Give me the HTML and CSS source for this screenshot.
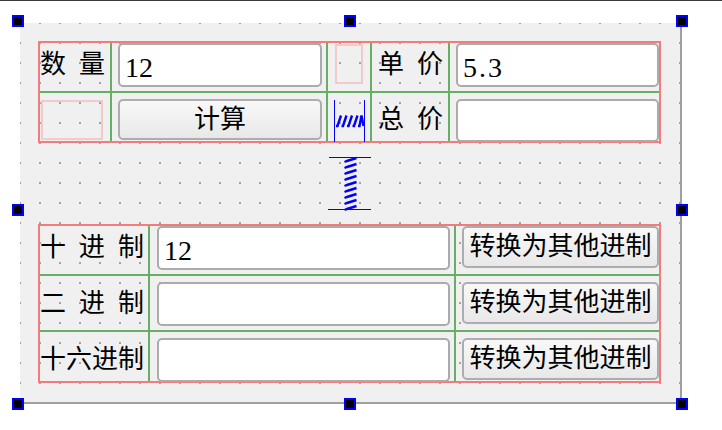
FILE: index.html
```html
<!DOCTYPE html>
<html lang="zh">
<head>
<meta charset="utf-8">
<title>Form</title>
<link rel="stylesheet" href="styles.css">
</head>
<body>
<div class="topline"></div>
<div class="stage">
  <div class="form">
    <span class="handle h-tl"></span>
    <span class="handle h-tm"></span>
    <span class="handle h-tr"></span>
    <span class="handle h-ml"></span>
    <span class="handle h-mr"></span>
    <span class="handle h-bl"></span>
    <span class="handle h-bm"></span>
    <span class="handle h-br"></span>

    <div class="grid-top">
      <div class="cell sep-r sep-b"><div class="label lbl-r1">数 量</div></div>
      <div class="cell sep-r sep-b"><div class="edit edit-t1">12</div></div>
      <div class="cell sep-r sep-b"><div class="ghost ghost-sm"></div></div>
      <div class="cell sep-r sep-b pad-l6"><div class="label lbl-r1">单 价</div></div>
      <div class="cell sep-b"><div class="edit edit-t2 edit-spaced">5.3</div></div>

      <div class="cell sep-r"><div class="ghost ghost-wide"></div></div>
      <div class="cell sep-r"><div class="btn btn-calc">计算</div></div>
      <div class="cell sep-r">
        <svg class="hspring" width="42" height="50" viewBox="0 0 42 50">
          <line x1="6.5" y1="7" x2="6.5" y2="49" stroke="#0000ff" stroke-width="1"/>
          <line x1="36.5" y1="7" x2="36.5" y2="49" stroke="#0000ff" stroke-width="1"/>
          <g stroke="#0000ff" stroke-width="2.4" fill="none">
            <polyline points="8,33 9.5,33 13,22.5"/>
            <polyline points="13.5,33 15,33 18.5,22.5"/>
            <polyline points="19,33 20.5,33 24,22.5"/>
            <polyline points="24.5,33 26,33 29.5,22.5"/>
            <polyline points="30,33 31.5,33 33.5,22.5 35.5,33"/>
          </g>
        </svg>
      </div>
      <div class="cell sep-r pad-l6"><div class="label lbl-r2">总 价</div></div>
      <div class="cell"><div class="edit edit-t3"></div></div>
    </div>

    <div class="vspacer">
      <svg width="44" height="56" viewBox="0 0 44 56">
        <line x1="1" y1="1.5" x2="43" y2="1.5" stroke="#0000ff" stroke-width="1"/>
        <line x1="0" y1="53.5" x2="43" y2="53.5" stroke="#0000ff" stroke-width="1"/>
        <g stroke="#0000ff" stroke-width="2.4" fill="none">
          <polyline points="16.5,6 19,5 28.5,2"/>
          <polyline points="16.5,12 19,11 28.5,8"/>
          <polyline points="16.5,18 19,17 28.5,14"/>
          <polyline points="16.5,24 19,23 28.5,20"/>
          <polyline points="16.5,30 19,29 28.5,26"/>
          <polyline points="16.5,36 19,35 28.5,32"/>
          <polyline points="16.5,42 19,41 28.5,38"/>
          <polyline points="16.5,48 19,47 28.5,44"/>
          <polyline points="16.5,54 19,53 28.5,50"/>
        </g>
      </svg>
    </div>

    <div class="grid-bot">
      <div class="cell sep-r sep-b"><div class="label lbl-b1">十 进 制</div></div>
      <div class="cell sep-r sep-b"><div class="edit edit-b edit-b1">12</div></div>
      <div class="cell sep-b"><div class="btn btn-conv btn-b1">转换为其他进制</div></div>

      <div class="cell sep-r sep-b"><div class="label lbl-b2">二 进 制</div></div>
      <div class="cell sep-r sep-b"><div class="edit edit-b edit-b2"></div></div>
      <div class="cell sep-b"><div class="btn btn-conv btn-b2">转换为其他进制</div></div>

      <div class="cell sep-r"><div class="label lbl-b2">十六进制</div></div>
      <div class="cell sep-r"><div class="edit edit-b edit-b2"></div></div>
      <div class="cell"><div class="btn btn-conv btn-b2">转换为其他进制</div></div>
    </div>
  </div>
</div>
</body>
</html>
```

FILE: styles.css
```css
* {
  box-sizing: border-box;
}

html,
body {
  margin: 0;
  padding: 0;
  background: #ffffff;
}

body {
  width: 722px;
  height: 430px;
  overflow: hidden;
  font-family: "Liberation Serif", "Noto Sans CJK SC", serif;
  font-size: 26px;
  color: #000000;
}

.topline {
  height: 1px;
  background: #3a3a3a;
}

.stage {
  padding: 22px 0 0 20px;
}

.form {
  position: relative;
  width: 662px;
  height: 381px;
  padding: 18px 0 0 18px;
  display: flex;
  flex-direction: column;
  align-items: flex-start;
  background-color: #f0f0f0;
  background-image: conic-gradient(from 270deg at 2px 2px, #a3a3a3 25%, transparent 0);
  background-size: 20px 20px;
  background-position: -1px -1px;
  border-right: 2px solid #a0a0a0;
  border-bottom: 2px solid #a0a0a0;
}

/* selection handles */
.handle {
  position: absolute;
  width: 12px;
  height: 12px;
  background: #000000;
  border: 2px solid #0000ff;
  z-index: 5;
}
.h-tl { left: -8px; top: -8px; }
.h-tm { left: 324px; top: -8px; }
.h-tr { left: 656px; top: -8px; }
.h-ml { left: -8px; top: 181px; }
.h-mr { left: 656px; top: 181px; }
.h-bl { left: -8px; top: 375px; }
.h-bm { left: 324px; top: 375px; }
.h-br { left: 656px; top: 375px; }

/* layouts */
.grid-top {
  width: 623px;
  height: 102px;
  border: 2px solid #f27b7b;
  display: grid;
  grid-template-columns: 72px 216px 44px 78px 209px;
  grid-template-rows: 50px 48px;
}

.grid-bot {
  margin-top: 12px;
  width: 623px;
  height: 159px;
  border: 2px solid #f27b7b;
  display: grid;
  grid-template-columns: 110px 306px 203px;
  grid-template-rows: 50px 56px 49px;
}

.cell {
  display: flex;
  align-items: flex-start;
  min-width: 0;
}

.sep-r {
  border-right: 2px solid #66b066;
}

.sep-b {
  border-bottom: 2px solid #66b066;
}

.pad-l6 {
  padding-left: 6px;
}

/* labels */
.label {
  display: flex;
  align-items: center;
  height: 44px;
  line-height: 1;
  white-space: pre;
  word-spacing: 6.5px;
}
.lbl-r1 { margin-top: 0; height: 44px; }
.lbl-r2 { margin-top: 6px; height: 42px; }
.lbl-b1 { margin-top: 0; }
.lbl-b2 { margin-top: 6px; }

/* line edits */
.edit {
  display: flex;
  align-items: center;
  height: 44px;
  padding: 5px 0 0 5px;
  font-size: 28px;
  line-height: 1;
  background: #ffffff;
  border: 2px solid #ababab;
  border-radius: 5px;
}
.edit-t1 { margin-left: 6px; width: 204px; }
.edit-t2 { margin-left: 6px; width: 203px; flex: none; }
.edit-t3 { margin-left: 6px; margin-top: 6px; width: 203px; height: 43px; flex: none; }
.edit-spaced { letter-spacing: 2px; }
.edit-b { margin-left: 7px; width: 293px; }
.edit-b1 { margin-top: 0; }
.edit-b2 { margin-top: 6px; }

/* push buttons */
.btn {
  display: flex;
  align-items: center;
  justify-content: center;
  line-height: 1;
  border: 2px solid #adadad;
  border-radius: 5px;
  background: linear-gradient(#f8f8f8, #e8e8e8);
  white-space: nowrap;
}
.btn-calc { margin: 6px 0 0 6px; width: 204px; height: 41px; }
.btn-conv { margin-left: 6px; width: 197px; height: 42px; flex: none; }
.btn-b1 { margin-top: 0; }
.btn-b2 { margin-top: 6px; }

/* placeholders (empty layout items) */
.ghost {
  border: 2px solid #f3caca;
}
.ghost-sm { margin: 1px 0 0 7px; width: 28px; height: 40px; }
.ghost-wide { margin: 7px 0 0 1px; width: 62px; height: 40px; }

/* spacers */
.hspring {
  display: block;
  flex: none;
  overflow: visible;
}

.vspacer {
  margin: 13px 0 0 290px;
  width: 44px;
  height: 56px;
}

.vspacer svg {
  display: block;
  overflow: visible;
}
```
